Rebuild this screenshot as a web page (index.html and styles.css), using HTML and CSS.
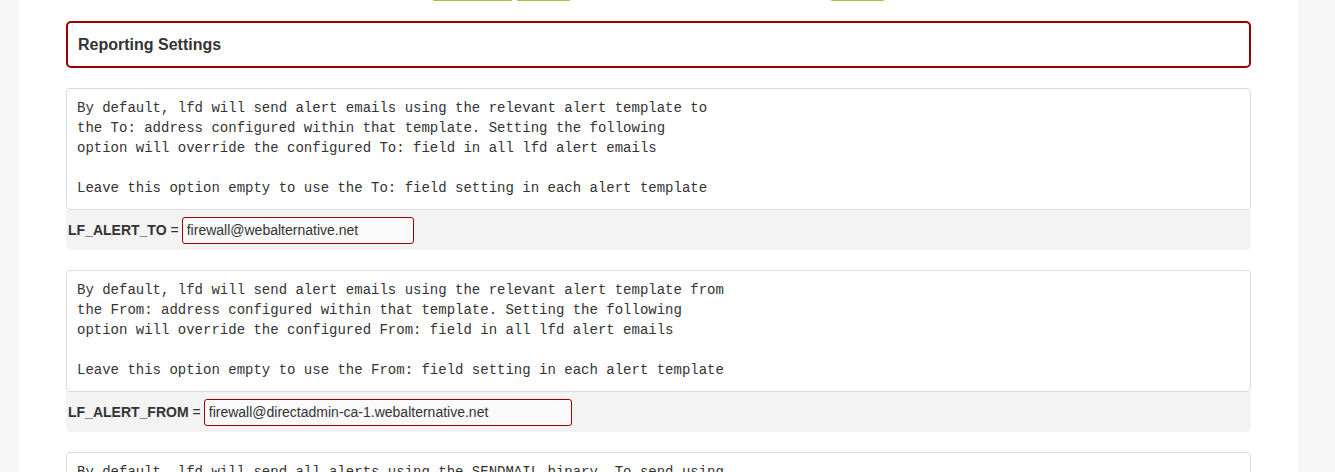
FILE: index.html
```html
<!DOCTYPE html>
<html lang="en">
<head>
<meta charset="utf-8">
<title>Reporting Settings</title>
<link rel="stylesheet" href="styles.css">
</head>
<body>
<div class="page">
  <div class="toolbar">
    <span class="btn btn-a"></span>
    <span class="btn btn-b"></span>
    <span class="btn btn-c"></span>
  </div>
  <div class="section-title">Reporting Settings</div>

  <div class="setting">
<pre class="comment">By default, lfd will send alert emails using the relevant alert template to
the To: address configured within that template. Setting the following
option will override the configured To: field in all lfd alert emails

Leave this option empty to use the To: field setting in each alert template</pre>
    <div class="option-row">
      <b class="opt-name">LF_ALERT_TO</b><span class="eq">=</span><input class="opt-input w-to" type="text" value="firewall@webalternative.net">
    </div>
  </div>

  <div class="setting">
<pre class="comment">By default, lfd will send alert emails using the relevant alert template from
the From: address configured within that template. Setting the following
option will override the configured From: field in all lfd alert emails

Leave this option empty to use the From: field setting in each alert template</pre>
    <div class="option-row">
      <b class="opt-name">LF_ALERT_FROM</b><span class="eq">=</span><input class="opt-input w-from" type="text" value="firewall@directadmin-ca-1.webalternative.net">
    </div>
  </div>

  <div class="setting">
<pre class="comment">By default, lfd will send all alerts using the SENDMAIL binary. To send using
SMTP directly, you can set the following to a relevant SMTP server address,
e.g. "127.0.0.1:25". If you set this option, the SENDMAIL option will be
ignored</pre>
  </div>
</div>
</body>
</html>
```

FILE: styles.css
```css
html, body {
  margin: 0;
  padding: 0;
  background: #f7f7f7;
  height: 100%;
  overflow: hidden;
}

body {
  font-family: "Liberation Sans", Arial, sans-serif;
  font-size: 14px;
  color: #333;
}

.page {
  margin: 0 37px 0 19px;
  background: #fff;
  padding: 0 47px;
  min-height: 100%;
  box-sizing: border-box;
}

.toolbar {
  display: flex;
  height: 2px;
  padding-left: 367px;
}

.btn {
  display: block;
  height: 1px;
  background: #a4c43d;
  border-radius: 0 0 2px 2px;
}

.btn-a { width: 79px; }
.btn-b { width: 53px; margin-left: 5px; }
.btn-c { width: 53px; margin-left: 261px; }

.section-title {
  margin-top: 19px;
  border: 2px solid #990000;
  border-radius: 5px;
  padding: 0 10px;
  height: 43px;
  line-height: 44px;
  font-size: 16px;
  font-weight: bold;
  color: #333;
}

.setting {
  margin-top: 20px;
}

.comment {
  margin: 0;
  border: 1px solid #dcdcdc;
  border-radius: 4px;
  background: #fff;
  padding: 9px 10px 11px;
  font-family: "Liberation Mono", "Courier New", monospace;
  font-size: 14px;
  line-height: 20px;
  color: #333;
  white-space: pre;
  overflow: hidden;
}

.option-row {
  display: flex;
  align-items: center;
  height: 40px;
  background: #f3f3f3;
  border-radius: 0 0 5px 5px;
  padding-left: 2px;
}

.opt-name {
  font-weight: bold;
}

.eq {
  margin: 0 3px 0 4px;
}

.opt-input {
  height: 27px;
  box-sizing: border-box;
  border: 1px solid #990000;
  border-radius: 3px;
  background: #fafafa;
  padding: 0 4px;
  font-family: "Liberation Sans", Arial, sans-serif;
  font-size: 14px;
  color: #333;
  outline: none;
}

.w-to { width: 232px; }
.w-from { width: 368px; }
```
